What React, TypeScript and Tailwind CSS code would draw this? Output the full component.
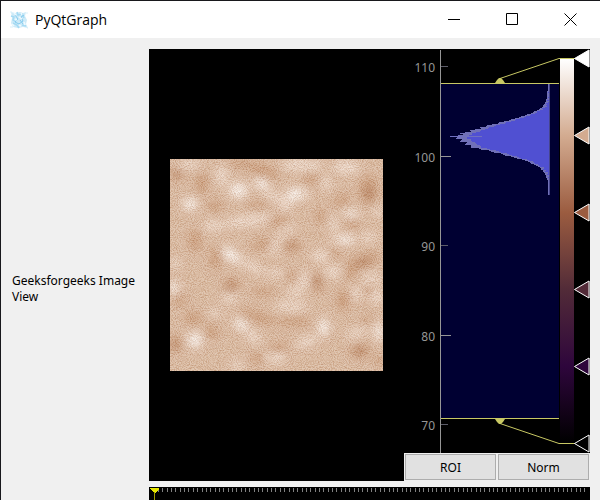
const TICKS = [
  { value: 110, y: 17, major: false },
  { value: 100, y: 107, major: true },
  { value: 90, y: 196, major: false },
  { value: 80, y: 286, major: true },
  { value: 70, y: 375, major: false },
]

const STOPS = [
  { color: '#ffffff', y: 9 },
  { color: '#d3ab90', y: 86 },
  { color: '#9b5c40', y: 163 },
  { color: '#522b38', y: 240 },
  { color: '#2e063c', y: 317 },
  { color: '#000000', y: 394 },
]

// [cx, cy, rx, ry, rotation]
const LIGHT = [
  [235, 120, 32, 26, 0], [90, 162, 26, 20, 0], [305, 103, 25, 18, 30], [345, 142, 35, 12, 30],
  [410, 132, 40, 20, 0], [380, 165, 18, 20, 0], [560, 52, 40, 20, 0], [425, 45, 65, 16, 0],
  [500, 100, 14, 22, 0], [265, 212, 76, 16, -8], [160, 228, 32, 15, 0], [575, 190, 30, 11, 0],
  [520, 220, 12, 26, 0], [550, 268, 38, 16, 0], [625, 262, 28, 12, 0], [655, 185, 16, 14, 0],
  [215, 315, 38, 18, 42], [278, 350, 38, 13, 25], [480, 318, 26, 18, 0], [520, 365, 26, 18, 0],
  [430, 390, 14, 30, 15], [395, 468, 50, 14, 0], [405, 425, 28, 12, 0], [635, 385, 28, 14, 0],
  [650, 440, 18, 22, 0], [590, 430, 14, 22, 0], [242, 523, 26, 17, 35], [280, 560, 28, 15, 35],
  [105, 570, 26, 26, 0], [490, 532, 18, 32, 0], [655, 545, 16, 32, 0], [440, 575, 36, 14, -20],
  [345, 624, 34, 14, 0], [590, 548, 34, 12, -20], [40, 412, 18, 20, 0], [45, 340, 20, 12, 0],
  [210, 447, 26, 12, 0], [230, 645, 22, 12, 0], [165, 488, 18, 12, 0], [343, 292, 12, 26, 0],
  [376, 246, 38, 9, -40], [185, 78, 18, 30, 0], [90, 42, 34, 12, 0], [345, 370, 28, 11, 0],
]

// smaller highlights that stay bright in the middle of a patch
const BRIGHT = [
  [90, 162, 14, 10, 0], [235, 122, 16, 14, 0], [213, 315, 24, 11, 42], [305, 103, 16, 9, 30],
  [105, 570, 15, 15, 0], [242, 525, 14, 10, 35], [405, 132, 20, 12, 0], [493, 530, 10, 18, 0],
  [560, 270, 18, 8, 0], [660, 545, 8, 16, 0], [40, 412, 10, 10, 0], [575, 190, 16, 6, 0],
]

const DARK = [
  [50, 73, 20, 17, 0], [310, 62, 50, 18, 20], [245, 42, 40, 12, 0], [125, 100, 20, 32, 0],
  [165, 168, 26, 14, 0], [452, 90, 22, 16, 0], [545, 150, 28, 14, -20], [625, 120, 28, 44, 0],
  [482, 200, 14, 24, 0], [576, 225, 24, 11, 0], [352, 212, 36, 12, -15], [305, 282, 34, 14, -15],
  [397, 288, 25, 18, 0], [165, 325, 16, 36, 0], [105, 272, 18, 34, 0], [215, 405, 28, 17, 0],
  [397, 378, 14, 16, 0], [472, 396, 16, 30, 0], [608, 335, 54, 18, -20], [525, 310, 14, 14, 0],
  [550, 450, 20, 32, 0], [570, 370, 16, 18, 0], [625, 420, 12, 12, 0], [290, 500, 56, 14, 20],
  [400, 515, 56, 12, 0], [100, 505, 28, 18, 0], [48, 580, 20, 26, 0], [155, 545, 18, 24, 0],
  [355, 592, 30, 12, -10], [290, 625, 22, 16, 0], [600, 603, 32, 20, 0], [658, 632, 12, 18, 0],
  [60, 450, 20, 16, 0], [310, 425, 36, 10, 0], [290, 165, 36, 9, 0], [620, 510, 16, 12, 0],
]

const DEEP = [
  [50, 73, 11, 9, 0], [472, 398, 9, 20, 0], [212, 407, 16, 9, 0], [610, 337, 28, 9, -20],
  [600, 603, 16, 10, 0], [627, 130, 12, 20, 0], [397, 288, 12, 9, 0], [42, 585, 9, 14, 0],
]

const PATCHES = [
  { shapes: LIGHT, fill: '#eedccf' },
  { shapes: DARK, fill: '#c89a78' },
  { shapes: BRIGHT, fill: '#ffffff' },
  { shapes: DEEP, fill: '#ac7351' },
]

const PROFILE = [
  [35, 1], [47, 2], [54, 4], [58, 7], [64, 18], [71, 41], [78, 68], [84, 87],
  [88, 94], [91, 89], [98, 76], [104, 50], [111, 24], [118, 9], [124, 4], [132, 1], [146, 1],
]

function profileAt(y: number) {
  const i = Math.max(1, PROFILE.findIndex(([py]) => py >= y))
  const [y0, w0] = PROFILE[i - 1]
  const [y1, w1] = PROFILE[i]
  return w0 + ((w1 - w0) * (y - y0)) / (y1 - y0)
}

const BINS = Array.from({ length: 111 }, (_, i) => {
  const y = 35 + i
  const base = profileAt(y)
  const noise = ((i * 37) % 11) / 11 - 0.5
  return {
    y,
    outer: Math.round(Math.max(1, base + 1 + noise * base * 0.08)),
    inner: Math.round(Math.max(0, base * 0.9 - 2 + noise * 3)),
  }
})

function TitleBar() {
  return (
    <header className="flex h-[37px] shrink-0 items-center bg-white">
      <svg className="ml-2 size-5" viewBox="0 0 20 20" fill="none">
        <path d="M2 2l4 1 5-1 3 1 3-1-1 4 2 4-1 4 2 4-5-1-5 1-5-1-2-4 1-5z" fill="#cdeaf8" />
        <path d="M2 6l3 1-1 3 3 2M8 2l1 3 4-1 2 4M4 13l4 2 2 3M13 15l4 1" stroke="#a5daf3" strokeWidth="1.5" />
        <path d="M6 5l3 4-3 3 4 2 4-3-2-4 3-2M11 10l3 4" stroke="#86ccee" />
        <path d="M5 3l2 2M10 7l3 2M6 9l2 1M15 12l1 3M10 15l2 1M3 14l2 2M12 3l1 2" stroke="#eef9fe" strokeWidth="1.5" />
        <path d="M1 2h2M17 3h2M1 17h3M18 18h1" stroke="#d9f0fa" />
      </svg>
      <h1 className="ml-1.5 font-['Open_Sans','Noto_Sans',sans-serif] text-sm text-black">PyQtGraph</h1>
      <div className="ml-auto flex h-full pr-px">
        <button aria-label="Minimize" className="grid w-[58px] place-items-center">
          <svg className="size-[13px]" viewBox="0 0 13 13" stroke="#000">
            <path d="M0 6.5h12" />
          </svg>
        </button>
        <button aria-label="Maximize" className="grid w-[58px] place-items-center">
          <svg className="size-[13px]" viewBox="0 0 13 13" stroke="#000" fill="none">
            <path d="M.5 .5h11v11h-11z" />
          </svg>
        </button>
        <button aria-label="Close" className="grid w-[58px] place-items-center">
          <svg className="size-[13px]" viewBox="0 0 13 13" stroke="#000">
            <path d="M.5 .5l12 12M12.5 .5l-12 12" />
          </svg>
        </button>
      </div>
    </header>
  )
}

function NoiseImage() {
  return (
    <svg className="w-[213px]" viewBox="30 27 639 636" role="img" aria-label="Image data">
      <defs>
        <filter id="soft" x="-10%" y="-10%" width="120%" height="120%">
          <feGaussianBlur stdDeviation="13" />
        </filter>
        <filter id="grain" x="0" y="0" width="100%" height="100%" colorInterpolationFilters="sRGB">
          <feTurbulence type="fractalNoise" baseFrequency="0.31" numOctaves="2" seed="7" />
          <feColorMatrix values="1.2 0 0 0 0.25  1.8 0 0 0 -0.17  2.2 0 0 0 -0.46  0 0 0 0 1" />
        </filter>
      </defs>
      <rect x="30" y="27" width="639" height="636" fill="#d9b9a1" />
      <g filter="url(#soft)">
        {PATCHES.map((p) =>
          p.shapes.map(([cx, cy, rx, ry, r]) => (
            <ellipse
              key={`${p.fill}-${cx}-${cy}`}
              cx={cx}
              cy={cy}
              rx={rx}
              ry={ry}
              fill={p.fill}
              transform={`rotate(${r} ${cx} ${cy})`}
            />
          ))
        )}
      </g>
      <rect x="30" y="27" width="639" height="636" filter="url(#grain)" className="opacity-20" />
    </svg>
  )
}

function Histogram() {
  return (
    <svg
      className="block h-[404px] w-[186px] font-['Noto_Sans','DejaVu_Sans',sans-serif] text-xs"
      viewBox="0 0 186 404"
    >
      <defs>
        <linearGradient id="levels" x1="0" y1="0" x2="0" y2="1">
          {STOPS.map((s, i) => (
            <stop key={s.y} offset={i / 5} stopColor={s.color} />
          ))}
        </linearGradient>
      </defs>
      <rect width="186" height="404" fill="#000" />
      <rect x="37" y="34" width="118" height="335" fill="#000032" />
      <g shapeRendering="crispEdges">
        {BINS.map((b) => (
          <g key={b.y}>
            <rect x={146 - b.outer} y={b.y} width={b.outer} height="1" fill="#7070b8" />
            <rect x={145 - b.inner} y={b.y} width={b.inner} height="1" fill="#5050d2" />
          </g>
        ))}
        <rect x="145" y="35" width="1" height="111" fill="#46468c" />
        <rect x="46" y="87" width="32" height="1" fill="#7070c0" />
      </g>
      <path d="M36.5 1v403" stroke="#969696" />
      {TICKS.map((t) => (
        <g key={t.value}>
          <path d={t.major ? `M37 ${t.y + 0.5}h10` : `M37 ${t.y + 0.5}h7`} stroke={t.major ? '#969696' : '#5c5c68'} />
          <text x="31" y={t.y + 6} textAnchor="end" fill="#969696">
            {t.value}
          </text>
        </g>
      ))}
      <rect x="156" y="10" width="14" height="384" fill="url(#levels)" />
      <g stroke="#c8c864" fill="none">
        <path d="M37 34.5h118M37 369.5h118" />
        <path d="M96 29.500L155 9.500H171M96 374.500L155 394.500H171" />
      </g>
      <path d="M91 34l2-3 2-2h2l2 2 2 3zM91 370l2 3 2 2h2l2-2 2-3z" fill="#c8c864" />
      {STOPS.map((s) => (
        <g key={s.y}>
          <path d={`M170.500 ${s.y + 0.5}L185 ${s.y - 8}V${s.y + 9}z`} fill={s.color} stroke="#fff" />
          <path d={`M185.500 ${s.y - 8}v17`} stroke="#999" />
        </g>
      ))}
    </svg>
  )
}

function Timeline() {
  return (
    <div className="mt-1.5 h-[13px] shrink-0 overflow-hidden bg-black">
      <svg className="block h-[13px] w-full" shapeRendering="crispEdges">
        {Array.from({ length: 99 }, (_, i) => (
          <rect key={i} x={Math.round(9 + i * 4.35)} y="1" width="1" height="4" fill="#808080" />
        ))}
        <path d="M1 1h9v1l-4 4h-1l-4-4z" fill="#e6e600" />
        <path d="M5.500 5v8" stroke="#a0a000" />
      </svg>
    </div>
  )
}

export default function App() {
  return (
    <div className="flex h-screen flex-col overflow-hidden border-t border-l border-[#18181c] bg-[#f0f0f0]">
      <TitleBar />
      <main className="flex min-h-0 flex-1 pt-[11px] pr-2.5 pl-[11px] font-['Noto_Sans','DejaVu_Sans',sans-serif] text-xs text-black">
        <p className="w-[137px] shrink-0 self-center pt-7 leading-4">Geeksforgeeks Image View</p>
        <div className="flex min-w-0 flex-1 flex-col">
          <div className="flex flex-1 bg-black">
            <div className="flex min-w-0 flex-1 items-center justify-center">
              <NoiseImage />
            </div>
            <div className="flex w-[186px] shrink-0 flex-col">
              <Histogram />
              <div className="grid flex-1 grid-cols-2 gap-0.5 bg-[#f0f0f0] p-px">
                <button className="border border-[#adadad] bg-[#e1e1e1] pt-0.5">ROI</button>
                <button className="border border-[#adadad] bg-[#e1e1e1] pt-0.5">Norm</button>
              </div>
            </div>
          </div>
          <Timeline />
        </div>
      </main>
    </div>
  )
}
